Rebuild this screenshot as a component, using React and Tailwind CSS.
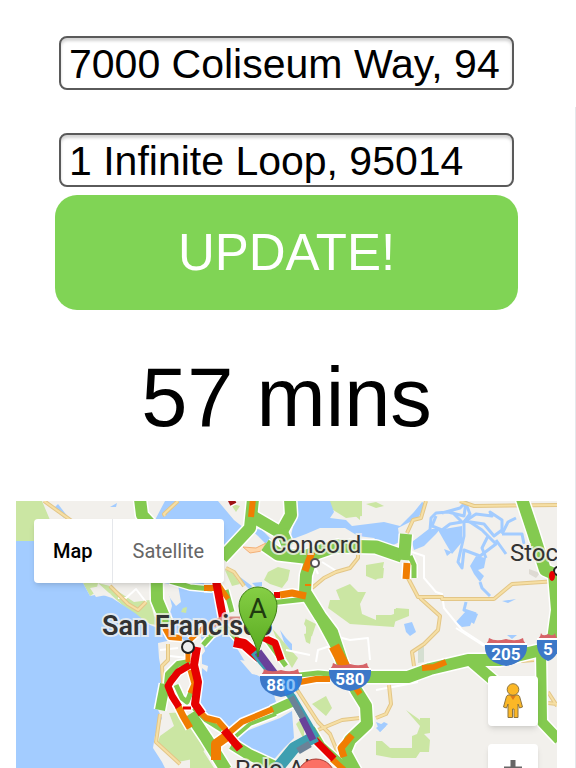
import { useState } from 'react';

const GREEN = '#84ca50';
const ORANGE = '#f07d02';
const RED = '#e60000';

const water = [
  // ocean
  'M16 541 L34 541 L50 583 L83 583 L90 596 L100 594 L112 598 L135 613 L150 625 L168 632 L172 640 L158 643 L159 658 L163 680 L162 690 L158 710 L162 718 L155 735 L153 748 L162 762 L166 770 L16 770 Z',
  // bay, north and central
  'M165 501 L218 501 L234 520 L244 528 L244 532 L222 552 L213 575 L214 583 L222 617 L228 632 L236 645 L232 650 L206 654 L200 634 L186 642 L176 634 L168 620 L172 606 L170 598 L165 583 L160 560 L155 520 Z',
  // south bay
  'M202 655 L214 640 L232 640 L244 660 L252 672 L262 678 L272 688 L276 702 L270 712 L240 724 L226 734 L210 716 L200 706 L202 680 Z',
  'M228 742 L244 732 L280 718 L292 711 L294 738 L284 748 L270 764 L258 764 L240 754 Z',
  // delta
  'M292 501 L330 501 L334 512 L330 518 L346 520 L352 526 L384 522 L400 526 L414 512 L422 502 L426 504 L418 518 L398 528 L400 542 L386 548 L374 538 L358 536 L345 528 L320 528 L306 534 L290 540 L294 522 Z',
  'M248 527 L262 530 L270 538 L278 546 L282 552 L270 548 L258 536 Z',
  'M412 542 L432 529 L440 529 L436 534 L424 546 L414 550 Z',
  'M438 530 L462 526 L462 542 L452 554 L446 544 Z',
  'M444 549 L452 552 L447 556 Z',
  'M476 556 L486 558 L484 568 L478 570 L484 576 L480 582 L474 574 L470 566 Z',
  'M456 622 L466 611 L474 616 L470 626 L462 627 Z M470 611 L478 614 L474 624 L468 620 Z',
  'M404 624 L412 622 L416 632 L410 636 L406 632 Z',
  'M376 728 L384 722 L388 724 L380 732 Z',
  'M58 504 L68 517 L64 518 L54 508 Z',
  'M240 577 L252 586 L250 590 L242 582 Z M252 583 L262 582 L262 586 L256 587 Z',
  'M502 601 L516 599 L508 603 Z M110 507 L117 503 L116 507 Z',
  'M280 630 L286 638 L292 644 L292 652 L284 642 Z M507 635 L517 635 L512 639 Z M376 722 L386 726 L380 732 Z',
];

const streams = [
  'M412 544 L430 530 L431 518 L436 513 L448 512 L464 516 L466 502 L460 508 L442 513',
  'M466 504 L470 514 L464 522 L464 536 L458 562 L462 568 L464 550 L480 556 L496 544 L482 530 L470 522',
  'M464 522 L476 514 L492 516 L490 512 L502 520 L502 530 L494 536 L484 524 L464 521',
  'M502 534 L508 522 L516 518 M496 540 L506 554 M486 558 L482 548 L488 536',
  'M480 582 L482 588 L490 596 M466 602 L464 610 L476 614 M502 534 L522 534 L524 544',
  'M436 516 L432 526 L442 530 L450 524 L462 522 L454 514',
];

const parks = [
  'M16 501 L42 501 L50 520 L34 541 L32 553 L16 550 Z',
  'M83 583 L98 583 L96 592 L90 596 Z M98 583 L110 586 L134 602 L150 600 L154 616 L164 626 L150 624 L128 610 Z',
  'M330 501 L362 501 L362 516 L346 518 L330 508 Z',
  'M366 504 L376 502 L384 506 L376 508 Z M380 529 L396 530 L384 534 Z M380 532 L374 528 Z',
  'M268 572 L278 567 L290 570 L288 580 L282 588 L270 584 L264 580 Z',
  'M366 565 L384 562 L382 572 L376 580 L366 576 Z',
  'M336 590 L350 584 L358 592 L366 592 L360 604 L362 614 L376 620 L394 614 L396 608 L409 609 L409 615 L396 618 L394 627 L350 624 L328 608 L330 600 L340 600 Z',
  'M306 619 L316 624 L312 636 L306 638 Z M306 618 L308 630 L304 624 Z',
  'M406 710 L420 720 L420 718 L430 718 L430 733 L424 734 L430 740 L429 752 L420 752 L416 758 L392 758 L376 755 L376 741 L382 741 L390 748 L412 748 L412 736 L417 734 L420 726 Z',
  'M169 713 L186 712 L198 738 L206 748 L198 758 L178 762 L158 742 L160 736 L174 726 Z',
  'M225 570 L232 572 L240 584 L232 586 Z',
  'M376 567 L384 568 L383 578 L376 579 Z M376 615 L394 615 L394 609 L409 609 L409 616 L394 622 L376 624 Z',
  'M182 609 L186 607 L186 612 L181 613 Z',
  'M272 628 L282 640 L298 658 L292 668 L282 652 Z M304 634 L312 632 L310 644 L306 642 Z',
  'M312 704 L326 696 L332 708 L326 716 Z M296 724 L304 716 L304 740 Z',
  'M190 740 L200 746 L214 768 L190 768 Z M346 508 L360 501 L360 520 Z',
  'M230 503 L240 506 L236 512 Z',
];

const minorRoads = [
  'M44 501 L76 524 M165 516 L164 514 L178 501 M426 501 L421 518 L413 520 L407 533',
  'M460 501 L474 506 L557 505',
  'M408 578 L418 597 L442 597 L442 599 L494 599 L512 584 L557 581',
  'M420 598 L440 616 L438 630 L424 644 L412 652 L414 666',
  'M312 588 L324 578 L336 572 L350 568 L358 558 L358 554',
  'M110 586 L128 604 L138 610 L146 602',
  'M168 644 L168 660 L162 666 L163 684',
  'M160 714 L156 742 L180 764 M389 685 L391 704 L386 714 L376 718',
  'M226 568 L234 572 L244 586 M294 685 L318 722 L330 734 L344 768',
  'M318 730 L342 720 L360 718 M557 706 L548 692 M548 703 L557 704 M521 661 L534 660',
];

const whiteRoads = [
  'M412 552 L424 556 L424 578 L436 592 L442 594 L444 608 L462 630 L485 645',
  'M118 598 L126 598 L136 589 L146 602 M160 650 L178 648 M170 656 L188 658',
  'M312 560 L318 574 M322 562 L338 572 M376 690 L398 686 L418 682 M334 636 L350 640 L368 638 L370 660',
  'M316 662 L318 650 L336 644 M456 628 L484 646 M286 650 L310 655',
];

// [path, colour, width], drawn in this order
const traffic = [
  ['M140 499 L142 515 L156 530 L157 600 L168 626', GREEN, 12],
  ['M170 581 L190 587 L212 589', GREEN, 5],
  ['M253 499 L250 528 L222 558', GREEN, 12],
  ['M290 499 L291 515 L281 533 L252 516', GREEN, 12],
  ['M281 530 L288 546', GREEN, 12],
  ['M265 545 L278 554 L304 557 L336 546 L376 547 L402 556', GREEN, 13],
  ['M314 550 L306 575 L305 592 L320 616 L332 632 L344 668 L356 690 L366 706 L367 724 L350 740 L345 752 L356 772', GREEN, 12],
  ['M406 534 L404 560', GREEN, 12],
  ['M410 556 L414 565 L414 578', GREEN, 5],
  ['M270 603 L306 599', GREEN, 5],
  ['M290 676 L318 673 L330 674', GREEN, 5],
  ['M340 677 L408 677 L430 669 L468 660 L500 660 L545 649', GREEN, 12],
  ['M472 662 L500 686', GREEN, 11],
  ['M522 499 L533 532 L545 570 L554 574', GREEN, 12],
  ['M553 574 L556 610 L552 640 L541 650 L542 722 L559 740', GREEN, 10],
  ['M317 617 L336 652', GREEN, 5],
  ['M226 590 L232 612', GREEN, 5],
  ['M203 645 L212 635 L226 627 L238 640', GREEN, 5],
  ['M264 636 L286 666', GREEN, 5],
  ['M165 684 L160 710', GREEN, 10],
  ['M190 662 L178 664 L168 674 L167 684', GREEN, 6],
  ['M176 685 L182 698 L187 702 L191 692', GREEN, 5],
  ['M190 714 L206 738 L226 770', GREEN, 12],
  ['M194 708 L206 720 L222 730', GREEN, 5],
  ['M232 744 L248 754 L274 766', GREEN, 11],
  ['M236 736 L250 724 L276 714', GREEN, 4],
  ['M272 711 L294 701', GREEN, 10],
  ['M312 728 L322 745 L352 772', GREEN, 6],
  ['M229 503 L235 500', '#9e1313', 6],
  ['M253 499 L251 517', ORANGE, 6],
  ['M204 588 L218 588', ORANGE, 6],
  ['M218 584 L228 599', ORANGE, 5],
  ['M312 552 L305 571', ORANGE, 7],
  ['M305 585 L311 585', ORANGE, 2],
  ['M280 595 L292 593 L306 596', ORANGE, 7],
  ['M407 563 L406 579', ORANGE, 7],
  ['M334 646 L345 667', ORANGE, 11],
  ['M300 682 L316 679 L330 679', ORANGE, 6],
  ['M356 688 L360 694', ORANGE, 6],
  ['M352 735 L341 748 L344 757', ORANGE, 7],
  ['M422 668 L434 667 L446 662', ORANGE, 6],
  ['M165 628 L170 637 L182 638', ORANGE, 6],
  ['M190 640 L204 627', ORANGE, 5],
  ['M188 645 L188 662', ORANGE, 5],
  ['M190 670 L194 684 L190 693', ORANGE, 5],
  ['M178 706 L183 716 L190 728', ORANGE, 7],
  ['M198 710 L206 718 L218 721 L226 730', ORANGE, 6],
  ['M230 732 L242 722 L273 709', ORANGE, 6],
  ['M230 734 L216 744 L216 760', ORANGE, 10],
  ['M332 759 L344 770', ORANGE, 6],
  ['M183 708 L191 708', RED, 3],
  ['M216 581 L223 618', RED, 8],
  ['M274 595 L280 595', RED, 6],
  ['M234 642 L244 644 L260 658', RED, 10],
  ['M262 637 L275 643 L281 660', RED, 7],
  ['M190 665 L178 672 L171 681 L168 686 L172 696 L179 707', RED, 7],
  ['M197 647 L194 665 L198 682 L195 704 L202 714', RED, 8],
  ['M224 730 L240 749', RED, 8],
  ['M311 736 L334 759', RED, 7],
];

const route = [
  ['M254 652 L276 678 L292 697 L316 738', '#3e9fb0', 8],
  ['M316 736 L294 748 L276 770', '#3e9fb0', 12],
  ['M258 652 L276 676', '#69419a', 8],
  ['M291 697 L304 720', '#6b8297', 6],
  ['M302 718 L313 740', '#69419a', 7],
  ['M298 751 L310 744', '#6b8297', 7],
];

function Shield({ x, y, width = 42, label }) {
  const w = width;
  return (
    <g transform={`translate(${x} ${y})`}>
      <path
        d={`M1 6 Q4 3 4 0 Q${w * 0.25} 4 ${w / 2} 1 Q${w * 0.75} 4 ${w - 4} 0 Q${w - 4} 3 ${w - 1} 6 Z`}
        fill="#d66468"
      />
      <path d={`M0 5 H${w} V8 H0 Z`} fill="#fff" />
      <path
        d={`M0 7 H${w} C${w + 1} 20 ${w * 0.78} 26 ${w / 2} 28 C${w * 0.22} 26 -1 20 0 7 Z`}
        fill="#3c78c8"
      />
      <text x={w / 2} y="22" textAnchor="middle" fontSize="17" fontWeight="700" fill="#fff">
        {label}
      </text>
    </g>
  );
}

function Lines({ items }) {
  return items.map(([d, color, width]) => (
    <path key={d + color} d={d} stroke={color} strokeWidth={width} />
  ));
}

function MapCanvas() {
  return (
    <svg
      viewBox="16 501 541 267"
      preserveAspectRatio="xMidYMin slice"
      className="block h-full w-full font-[Roboto,sans-serif]"
      role="img"
      aria-label="Traffic map of the Bay Area"
    >
      <defs>
        <linearGradient id="pin" x1="0" y1="0" x2="0" y2="1">
          <stop offset="0" stopColor="#86cf45" />
          <stop offset="1" stopColor="#56a81e" />
        </linearGradient>
      </defs>

      <rect x="16" y="501" width="541" height="600" fill="#f2f0ec" />
      <g fill="#cbe6a3">
        {parks.map((d) => <path key={d} d={d} />)}
      </g>
      <g fill="#a3ccff">
        {water.map((d) => <path key={d} d={d} />)}
      </g>
      {/* Headlands and islands */}
      <path d="M90 588 L101 586 L99 592 L112 594 L96 597 Z M163 583 L178 585 L181 602 L176 606 L170 598 Z M240 660 L254 662 L262 676 L252 674 Z M202 664 L208 666 L207 672 L202 668 Z" fill="#f2f0ec" />
      <path d="M181 612 L183 608 L187 607 L186 613 Z" fill="#cbe6a3" />
      <path d="M243 547 L256 548 L266 543 L262 551 L250 553 Z" fill="#ffd6ab" stroke="#f2b077" />
      <path d="M418 648 L424 646 L424 662 L418 663 Z" fill="#d5dfd1" />
      <path d="M529 569 L540 573 L536 578 L529 574 Z" fill="#dedad3" />

      <g fill="none" strokeLinejoin="round">
        <g stroke="#a3ccff" strokeWidth="3">
          {streams.map((d) => <path key={d} d={d} />)}
        </g>
        <g stroke="#fff" strokeWidth="2">
          {whiteRoads.map((d) => <path key={d} d={d} />)}
        </g>
        <g stroke="#e3c687" strokeWidth="4">
          {minorRoads.map((d) => <path key={d} d={d} />)}
        </g>
        <g stroke="#f6dfa4" strokeWidth="2">
          {minorRoads.map((d) => <path key={d} d={d} />)}
        </g>
        <g stroke="#fff">
          {traffic.map(([d, color, width]) => (
            <path key={d + color} d={d} strokeWidth={width + 3} />
          ))}
        </g>
        <Lines items={traffic} />
        <path d="M204 628 L222 620 L240 620" stroke="#d98f87" strokeWidth="7" />
        <Lines items={route} />
      </g>

      <g fill="#fff" stroke="#222" strokeWidth="2">
        <circle cx="188" cy="647" r="6" fill="#ededed" />
        <circle cx="315" cy="563" r="4" stroke="#555" />
        <circle cx="558" cy="571" r="4" />
      </g>
      <ellipse cx="552" cy="576" rx="3" ry="5" fill={RED} />

      <Shield x={260} y={669} label="880" />
      <path d="M281 677 L297 677 L299 690 L285 695 Z" fill="#1e88f0" opacity="0.5" />
      <Shield x={329} y={663} label="580" />
      <Shield x={485} y={638} label="205" />
      <Shield x={537} y={633} width={22} label="5" />

      <g fill="#333" stroke="#f2f0ec" strokeWidth="4" strokeOpacity="0.8" paintOrder="stroke" fontSize="24">
        <text x="271" y="553">Concord</text>
        <text x="510" y="561">Stockton</text>
        <text x="235" y="777">Palo Alto</text>
        <text x="102" y="635" fontSize="27" fontWeight="600">San Francisco</text>
      </g>

      {/* Pins */}
      <path d="M316 829 C314 806 297 796 297 778 A19 19 0 0 1 335 778 C335 796 318 806 316 829 Z" fill="#fb7064" stroke="#a63b33" />
      <path d="M258 657 C256 634 239 624 239 606 A19 19 0 0 1 277 606 C277 624 260 634 258 657 Z" fill="url(#pin)" stroke="#3f7f16" />
      <text x="258" y="618" textAnchor="middle" fontSize="28" fill="#1f3a10">A</text>
    </svg>
  );
}

function Pegman() {
  return (
    <svg viewBox="0 0 20 36" className="h-9 w-5" aria-hidden="true">
      <path
        d="M5 12 H15 Q17 13 17 15 L19.5 24 L16.5 25 L15 21 V34.5 H11 V26 H9.5 V34.5 H5 V21 L3.5 25 L0.5 24 L3 15 Q3 13 5 12 Z"
        fill="#fbb726"
        stroke="#8c7440"
        strokeWidth="1"
      />
      <path d="M7 12.5 H13 L10 17 Z" fill="#e07a18" />
      <circle cx="10" cy="6.5" r="5.8" fill="#fbb726" stroke="#8c7440" strokeWidth="1" />
    </svg>
  );
}

function AddressInput({ label, value, onChange }) {
  return (
    <input
      type="text"
      aria-label={label}
      value={value}
      onChange={(e) => onChange(e.target.value)}
      className="mx-1 h-[54px] rounded-lg border-2 border-[#5a5a5a] bg-white px-2 pt-0.5 text-[41px] leading-none text-black inset-shadow-[0_3px_3px_#d4d4d4] outline-none"
    />
  );
}

export default function App() {
  const [from, setFrom] = useState('7000 Coliseum Way, 94');
  const [to, setTo] = useState('1 Infinite Loop, 95014');
  const [mapType, setMapType] = useState('Map');

  return (
    <div className="relative flex h-screen flex-col overflow-hidden bg-white pr-[3px] pt-9 font-['Liberation_Sans',Arial,sans-serif]">
      {/* Addresses */}
      <form className="flex flex-col px-[55px]" onSubmit={(e) => e.preventDefault()}>
        <AddressInput label="From" value={from} onChange={setFrom} />
        <div className="h-[43px]" />
        <AddressInput label="To" value={to} onChange={setTo} />
        <button
          type="submit"
          className="mt-2 h-[115px] rounded-[22px] bg-[#80d455] text-[51px] leading-none text-white"
        >
          UPDATE!
        </button>
      </form>

      {/* Travel time */}
      <p className="pb-[55px] pt-10 text-center text-[83px] leading-[96px] text-black">57 mins</p>

      {/* Map */}
      <div className="relative mx-4 min-h-0 flex-1 overflow-hidden">
        <MapCanvas />

        <div className="absolute left-[18px] top-[18px] flex h-16 overflow-hidden rounded-sm bg-white font-[Roboto,sans-serif] text-xl shadow-md">
          <button
            type="button"
            onClick={() => setMapType('Map')}
            className={`border-r border-gray-200 px-[19px] ${mapType === 'Map' ? 'font-medium text-black' : 'text-[#666]'}`}
          >
            Map
          </button>
          <button
            type="button"
            onClick={() => setMapType('Satellite')}
            className={`px-5 ${mapType === 'Satellite' ? 'font-medium text-black' : 'text-[#666]'}`}
          >
            Satellite
          </button>
        </div>

        <div className="absolute right-[19px] top-[175px] flex flex-col gap-[18px]">
          <button type="button" aria-label="Street View" className="flex size-[50px] items-center justify-center rounded-sm bg-white shadow-md">
            <Pegman />
          </button>
          <button type="button" aria-label="Zoom in" className="flex size-[50px] items-center justify-center rounded-sm bg-white shadow-md">
            <svg viewBox="0 0 18 18" className="size-[18px]" aria-hidden="true">
              <path d="M9 0 V18 M0 9 H18" stroke="#666" strokeWidth="5" />
            </svg>
          </button>
        </div>
      </div>

      {/* Scroll track */}
      <div className="absolute bottom-0 right-0 top-[107px] w-px bg-gray-200" />
    </div>
  );
}
